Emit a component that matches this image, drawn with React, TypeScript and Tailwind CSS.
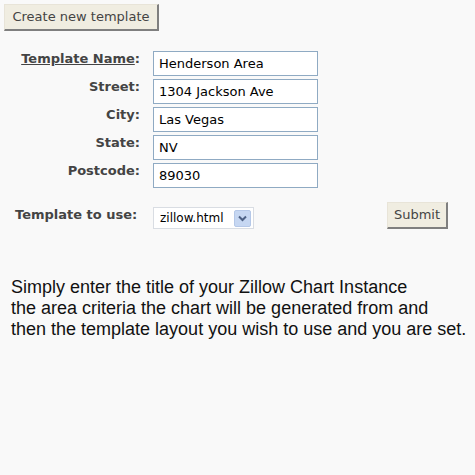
import React from "react";

const fields: [string, string][] = [
  ["Street", "1304 Jackson Ave"],
  ["City", "Las Vegas"],
  ["State", "NV"],
  ["Postcode", "89030"],
];

function Row({ label, value, underline }: { label: string; value: string; underline?: boolean }) {
  return (
    <div className="flex items-start h-[25px]">
      <div className="w-[140px] text-right font-bold text-[13px] leading-[15px] pt-[0px] text-[#444]">
        {underline ? <span className="underline">{label}</span> : label}:
      </div>
      <div className="ml-[13px] w-[165px] h-[25px] border border-[#8faac3] bg-white pl-[5px] text-[13px] leading-[23px] text-black">
        {value}
      </div>
    </div>
  );
}

export default function App() {
  return (
    <div
      className="w-[475px] h-[475px] bg-[#f9f9f9] relative"
      style={{ fontFamily: '"DejaVu Sans", Verdana, sans-serif' }}
    >
      <div className="pt-[4px] pl-[4px]">
        <div className="w-[155px] h-[27px] bg-[#f0ede1] border-t border-l border-[#e8e4d8] border-r-2 border-b-2 border-r-[#7f7f7f] border-b-[#7f7f7f] flex items-center justify-center text-[13px] text-[#444]">
          Create new template
        </div>
      </div>
      <div className="mt-[20px] flex flex-col gap-[3px]">
        <Row label="Template Name" value="Henderson Area" underline />
        {fields.map(([l, v]) => (
          <Row key={l} label={l} value={v} />
        ))}
      </div>
      <div className="mt-[14px] flex items-start h-[27px]">
        <div className="w-[153px] pl-[15px] font-bold text-[13px] leading-[15px] pt-[5px] text-[#444]">
          Template to use:
        </div>
        <div className="mt-[5px] w-[101px] h-[22px] border border-[#d9dde3] bg-white flex items-center justify-between pl-[6px] pr-[2px] text-[12px] text-black">
          <span>zillow.html</span>
          <div className="w-[17px] h-[17px] rounded-[2px] bg-[#c6d7f2] border border-[#b5c8e8] flex items-center justify-center">
            <svg width="9" height="7" viewBox="0 0 9 7">
              <path d="M1 1.5 L4.5 5 L8 1.5" fill="none" stroke="#4d6185" strokeWidth="2" />
            </svg>
          </div>
        </div>
        <div className="ml-[133px] w-[61px] h-[27px] bg-[#f0ede1] border-t border-l border-[#e8e4d8] border-r-2 border-b-2 border-r-[#7f7f7f] border-b-[#7f7f7f] flex items-center justify-center text-[13px] text-[#444]">
          Submit
        </div>
      </div>
      <p
        className="mt-[48px] pl-[11px] text-[18px] leading-[21px] text-[#111]"
        style={{ fontFamily: '"Liberation Sans", Arial, sans-serif' }}
      >
        Simply enter the title of your Zillow Chart Instance
        <br />
        the area criteria the chart will be generated from and
        <br />
        then the template layout you wish to use and you are set.
      </p>
    </div>
  );
}
